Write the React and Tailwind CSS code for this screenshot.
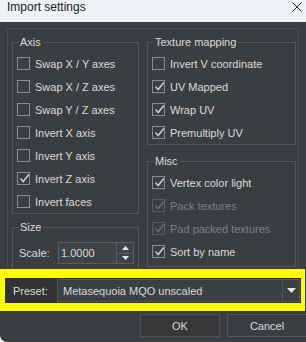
import { useState } from 'react'

const axisOptions = [
  { label: 'Swap X / Y axes', checked: false },
  { label: 'Swap X / Z axes', checked: false },
  { label: 'Swap Y / Z axes', checked: false },
  { label: 'Invert X axis', checked: false },
  { label: 'Invert Y axis', checked: false },
  { label: 'Invert Z axis', checked: true },
  { label: 'Invert faces', checked: false }
]

const textureOptions = [
  { label: 'Invert V coordinate', checked: false },
  { label: 'UV Mapped', checked: true },
  { label: 'Wrap UV', checked: true },
  { label: 'Premultiply UV', checked: true }
]

const miscOptions = [
  { label: 'Vertex color light', checked: true },
  { label: 'Pack textures', checked: true, disabled: true },
  { label: 'Pad packed textures', checked: true, disabled: true },
  { label: 'Sort by name', checked: true }
]

function CheckRow({ label, checked, disabled }) {
  const [on, setOn] = useState(checked)
  return (
    <div
      className="h-[23px] flex items-center gap-[5px] cursor-default"
      onClick={() => !disabled && setOn(!on)}
    >
      <div
        className={`w-[13px] h-[13px] shrink-0 border relative ${
          disabled ? 'border-[#5c5f62]' : 'border-[#8a8d90]'
        }`}
      >
        {on && (
          <svg className="absolute left-[0px] top-[-1px]" width="13" height="13" viewBox="0 0 13 13">
            <path
              d="M2.5 6.5 L5.2 9.5 L10.8 2.5"
              fill="none"
              stroke={disabled ? '#686b6e' : '#c9c9c9'}
              strokeWidth="1.6"
            />
          </svg>
        )}
      </div>
      <span className={`whitespace-nowrap ${disabled ? 'text-[#7b7e81]' : 'text-[#dadada]'}`}>{label}</span>
    </div>
  )
}

function Group({ title, className = '', children }) {
  return (
    <div className={`relative border border-[#55585b] ${className}`}>
      <span className="absolute left-[5px] -top-[8px] px-[2px] leading-[14px] bg-[#3b3e40] text-[#dadada]">
        {title}
      </span>
      {children}
    </div>
  )
}

export default function App() {
  const [scale, setScale] = useState('1.0000')

  return (
    <div className="w-[306px] h-[342px] bg-white overflow-hidden font-['Liberation_Sans',Arial,sans-serif] text-[11px] leading-[14px]">
      <div className="h-[342px] flex flex-col bg-[#3b3e40] rounded-bl-[7px] overflow-hidden">
        {/* title bar */}
        <div className="h-[22px] shrink-0 bg-[#eff3f8] flex items-start justify-between pl-[7px] pr-[4px]">
          <span className="text-[12px] leading-[14px] text-[#1b1b1b] mt-[0px]">Import settings</span>
          <svg className="mt-[2px]" width="10" height="10" viewBox="0 0 10 10">
            <path d="M0.5 0.5 L9.5 9.5 M9.5 0.5 L0.5 9.5" stroke="#222" strokeWidth="1" />
          </svg>
        </div>

        {/* main frame */}
        <div className="mx-[7px] mt-[6px] h-[245px] shrink-0 border border-[#4a4d50] flex pl-[4px] pt-[13px] gap-[8px]">
          <div className="w-[127px] flex flex-col">
            <Group title="Axis" className="pt-[9px] pl-[4px]">
              {axisOptions.map(o => (
                <CheckRow key={o.label} {...o} />
              ))}
            </Group>
            <Group title="Size" className="mt-[13px] pt-[14px] pb-[5px] pl-[6px]">
              <div className="flex items-center">
                <span className="w-[39px] text-[#dadada]">Scale:</span>
                <div className="w-[76px] h-[22px] border border-[#5a5d60] bg-[#404346] flex">
                  <input
                    value={scale}
                    onChange={e => setScale(e.target.value)}
                    className="w-[57px] h-full bg-transparent outline-none pl-[2px] text-[#dadada]"
                  />
                  <div className="w-[17px] flex flex-col border-l border-[#5a5d60]">
                    <div className="flex-1 flex items-center justify-center border-b border-[#5a5d60]">
                      <svg width="7" height="4" viewBox="0 0 7 4">
                        <path d="M0 4 L3.5 0 L7 4 Z" fill="#e6e6e6" />
                      </svg>
                    </div>
                    <div className="flex-1 flex items-center justify-center">
                      <svg width="7" height="4" viewBox="0 0 7 4">
                        <path d="M0 0 L7 0 L3.5 4 Z" fill="#e6e6e6" />
                      </svg>
                    </div>
                  </div>
                </div>
              </div>
            </Group>
          </div>

          <div className="w-[149px] flex flex-col">
            <Group title="Texture mapping" className="pt-[9px] pl-[4px]">
              {textureOptions.map(o => (
                <CheckRow key={o.label} {...o} />
              ))}
            </Group>
            <Group title="Misc" className="mt-[16px] pt-[9px] pb-[3px] pl-[4px]">
              {miscOptions.map(o => (
                <CheckRow key={o.label} {...o} />
              ))}
            </Group>
          </div>
        </div>

        {/* preset row, highlighted */}
        <div className="relative mx-[5px] mt-[5px] h-[25px] shrink-0 bg-[#303234] flex items-center">
          <div className="absolute -top-[9px] -bottom-[8px] -left-[5px] -right-[4px] border-[#ffff00] border-t-[9px] border-b-[8px] border-l-[5px] border-r-[4px] pointer-events-none" />
          <span className="pl-[8px] w-[52px] text-[#dadada]">Preset:</span>
          <div className="flex-1 h-[23px] mr-[1px] border border-[#55585b] bg-[#3d4043] flex items-center">
            <span className="flex-1 pl-[5px] text-[#dadada]">Metasequoia MQO unscaled</span>
            <div className="w-[17px] h-full border-l border-[#55585b] flex items-center justify-center">
              <svg width="9" height="5" viewBox="0 0 9 5">
                <path d="M0 0 L9 0 L4.5 5 Z" fill="#e6e6e6" />
              </svg>
            </div>
          </div>
        </div>

        {/* buttons */}
        <div className="flex pl-[140px] gap-[7px] mt-[11px]">
          <button className="w-[80px] h-[23px] shrink-0 border border-[#4e5154] bg-[#353739] text-[#dadada]">OK</button>
          <button className="w-[80px] h-[23px] shrink-0 border border-[#55585b] bg-[#3b3e40] text-[#dadada]">Cancel</button>
        </div>
      </div>
    </div>
  )
}
